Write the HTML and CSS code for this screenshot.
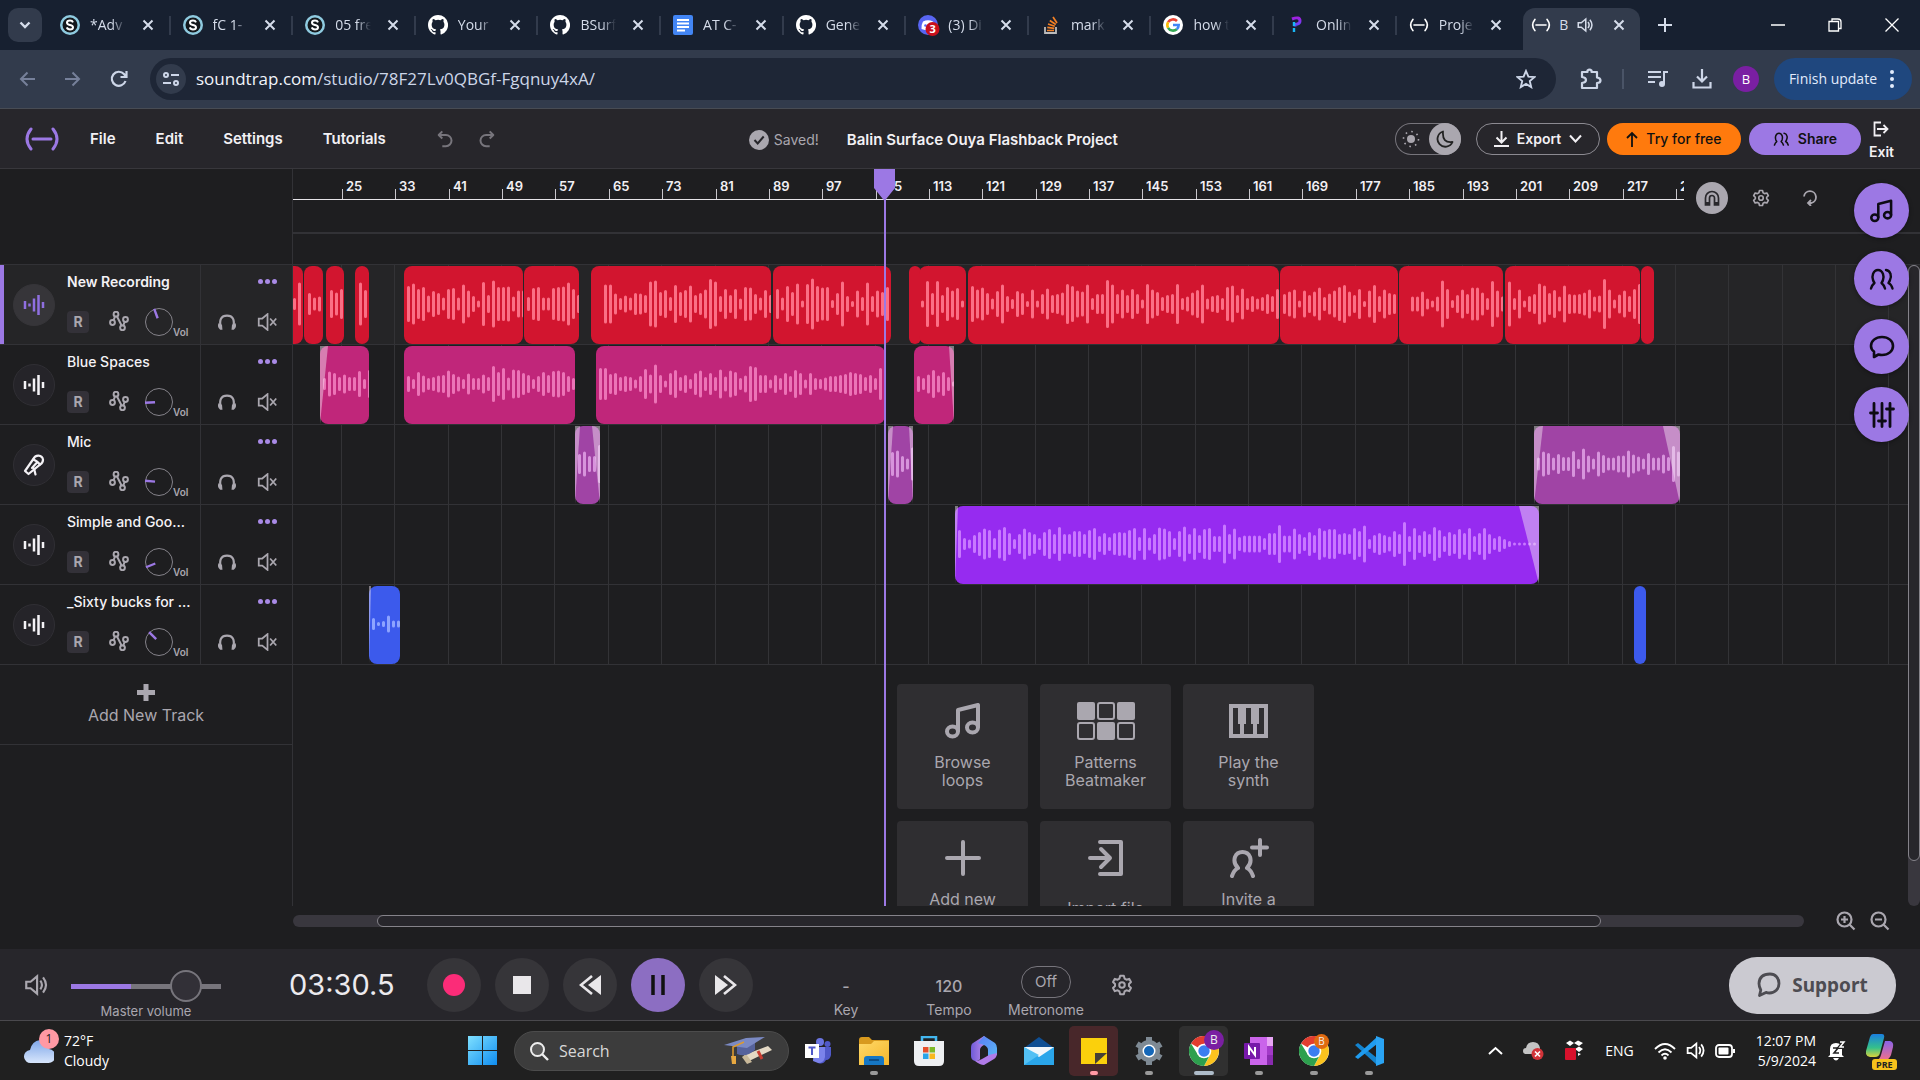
FILE: index.html
```html
<!DOCTYPE html>
<html lang="en">
<head>
<meta charset="utf-8">
<title>Balin Surface Ouya Flashback Project</title>
<link rel="stylesheet" href="styles.css">
</head>
<body>
<svg class="sprite" aria-hidden="true">
  <defs>
    <linearGradient id="gWin" x1="0" y1="0" x2="1" y2="1"><stop offset="0" stop-color="#7fe0ff"/><stop offset="1" stop-color="#0f8df0"/></linearGradient>
    <linearGradient id="gCloud" x1="0" y1="0" x2="0" y2="1"><stop offset="0" stop-color="#7ea6e8"/><stop offset="1" stop-color="#d8e6fc"/></linearGradient>
    <linearGradient id="gFolder" x1="0" y1="0" x2="1" y2="1"><stop offset="0" stop-color="#ffd968"/><stop offset="1" stop-color="#f5b62c"/></linearGradient>
    <linearGradient id="gM1" x1="0" y1="0" x2="1" y2="1"><stop offset="0" stop-color="#5b7cf5"/><stop offset="1" stop-color="#59b8f5"/></linearGradient>
    <linearGradient id="gM2" x1="0" y1="0" x2="1" y2="0"><stop offset="0" stop-color="#6f5bd8"/><stop offset="1" stop-color="#d69bf0"/></linearGradient>
    <linearGradient id="gC1" x1="0" y1="0" x2="0" y2="1"><stop offset="0" stop-color="#1a7fe0"/><stop offset=".6" stop-color="#35c08a"/><stop offset="1" stop-color="#d9d23c"/></linearGradient>
    <linearGradient id="gC2" x1="0" y1="0" x2="0" y2="1"><stop offset="0" stop-color="#8a63e8"/><stop offset="1" stop-color="#f0708a"/></linearGradient>
    <linearGradient id="gP" x1="0" y1="0" x2="0" y2="1"><stop offset="0" stop-color="#a020e0"/><stop offset="1" stop-color="#5a50ff"/></linearGradient>
  </defs>
  <symbol id="i-x" viewBox="0 0 12 12"><path d="M1.500 1.500l9 9M10.500 1.500l-9 9" stroke="currentColor" stroke-width="2" fill="none"/></symbol>
  <symbol id="i-s" viewBox="0 0 20 20"><circle cx="10" cy="10" r="10" fill="#8fcbe0"/><circle cx="10" cy="10" r="7.500" fill="#14181c"/><path d="M13 7.300C12.500 6 11.500 5.500 10 5.500c-1.800 0-3 .8-3 2.200 0 3 6 1.400 6 4.500 0 1.500-1.300 2.300-3 2.300-1.600 0-2.700-.7-3.200-2.100" fill="none" stroke="#fff" stroke-width="2"/></symbol>
  <symbol id="i-gh" viewBox="0 0 16 16"><path fill="#fff" d="M8 0C3.580 0 0 3.580 0 8c0 3.540 2.290 6.530 5.470 7.590.4.070.55-.17.55-.38v-1.500c-2.010.37-2.530-.49-2.690-.94-.09-.23-.48-.94-.82-1.130-.28-.15-.68-.52-.01-.53.63-.01 1.080.58 1.230.82.72 1.210 1.870.87 2.330.66.07-.52.28-.87.51-1.070-1.780-.2-3.640-.89-3.640-3.950 0-.87.31-1.590.82-2.150-.08-.2-.36-1.020.08-2.120 0 0 .67-.21 2.200.82a7.600 7.600 0 0 1 4 0c1.530-1.040 2.200-.82 2.200-.82.44 1.100.16 1.920.08 2.120.51.56.82 1.270.82 2.150 0 3.070-1.870 3.750-3.650 3.950.29.25.54.73.54 1.480v2.210c0 .21.15.46.55.38A8 8 0 0 0 8 0z"/></symbol>
  <symbol id="i-doc" viewBox="0 0 20 20"><rect width="20" height="20" rx="2" fill="#4285f4"/><path d="M4 5h12M4 8.500h12M4 12h12M4 15.500h8" stroke="#fff" stroke-width="1.800"/></symbol>
  <symbol id="i-dis" viewBox="0 0 22 22"><circle cx="10" cy="10" r="10" fill="#5865f2"/><path d="M5 6.500Q10 4 15 6.500q2 3.500 1.500 7.500-6 2.500-13 0Q3 10 5 6.500z" fill="#fff"/><circle cx="7.500" cy="10.500" r="1.300" fill="#5865f2"/><circle cx="14.500" cy="14" r="7" fill="#c8101c"/></symbol>
  <symbol id="i-so" viewBox="0 0 20 20"><path d="M4 12v6h11v-6" fill="none" stroke="#bcbbbb" stroke-width="1.800"/><path d="M6 15.500h7M6.300 12.300l7 1M7 9l6.800 2.300M8.800 5.500l6 4M12 2l4 6" stroke="#f48024" stroke-width="1.700"/></symbol>
  <symbol id="i-g" viewBox="0 0 20 20"><circle cx="10" cy="10" r="10" fill="#fff"/><g fill="none" stroke-width="2.600"><path d="M14 6A5.700 5.700 0 0 0 5.100 7.200" stroke="#ea4335"/><path d="M5.100 7.200a5.700 5.700 0 0 0 0 5.600" stroke="#fbbc05"/><path d="M5.100 12.800a5.700 5.700 0 0 0 8.700 1.400" stroke="#34a853"/><path d="M13.800 14.200A5.700 5.700 0 0 0 15.700 10H10" stroke="#4285f4"/></g></symbol>
  <symbol id="i-p" viewBox="0 0 20 20"><path d="M6 4q8-3 8 2 0 3-5 3.500v2" fill="none" stroke="url(#gP)" stroke-width="3"/><path d="M8 7v11" stroke="#19b6f5" stroke-width="2.400" stroke-dasharray="4 2"/></symbol>
  <symbol id="i-st" viewBox="0 0 36 24"><path d="M7 2Q-1 12 7 22M29 2q8 10 0 20M9 12h18" fill="none" stroke="currentColor" stroke-width="3" stroke-linecap="round"/></symbol>
  <symbol id="i-spk" viewBox="0 0 24 24"><path d="M3 9v6h4l6 5V4L7 9z" fill="none" stroke="currentColor" stroke-width="2"/><path d="M16 8q3 4 0 8M18.500 5q5.500 7 0 14" fill="none" stroke="currentColor" stroke-width="2"/></symbol>
  <symbol id="i-mute" viewBox="0 0 24 20"><path d="M2 6v8h4l6 5V1L6 6z" fill="none" stroke="currentColor" stroke-width="2"/><path d="M15 6l7 8M22 6l-7 8" stroke="currentColor" stroke-width="2"/></symbol>
  <symbol id="i-note" viewBox="0 0 36 36"><g fill="none" stroke="currentColor" stroke-width="4" stroke-linejoin="round"><ellipse cx="7.500" cy="28.500" rx="5.500" ry="5"/><ellipse cx="27.500" cy="24.500" rx="5.500" ry="5"/><path d="M13 28.500V7l20-5v22.500"/></g></symbol>
  <symbol id="i-people" viewBox="0 0 26 22"><g fill="none" stroke="currentColor" stroke-width="2.400" stroke-linecap="round" stroke-linejoin="round"><path d="M2 20.500q1-3.500 3.500-5.500Q4.500 13.500 4 12q-1-3.500 0-6 1.500-4 5-4t5 4q1 2.500 0 6-.5 1.500-1.500 3 2.500 2 3.500 5.500M17 2q3.500.5 4.500 4 1 3-.5 6-.5 1.500-1.500 3 3 1.500 4 5.500"/></g></symbol>
  <symbol id="i-chat" viewBox="0 0 26 24"><path d="M13 2c6.500 0 11 4 11 9s-4.500 9-11 9q-2 0-3.500-.5L5 22v-5.500Q2 14.500 2 11c0-5 4.500-9 11-9z" fill="none" stroke="currentColor" stroke-width="2.600" stroke-linejoin="round"/></symbol>
  <symbol id="i-mix" viewBox="0 0 26 26"><path d="M5 1.500v23M13 1.500v23M21 1.500v23M1.500 11h7M9.500 19h7M17.500 7h7" fill="none" stroke="currentColor" stroke-width="2.800" stroke-linecap="round"/></symbol>
  <symbol id="i-gear" viewBox="0 0 24 24"><path d="M10 2h4l.8 3 2 1.200 3-.9 2 3.500-2.200 2.200v2l2.200 2.200-2 3.500-3-.9-2 1.200-.8 3h-4l-.8-3-2-1.200-3 .9-2-3.500L4.400 13v-2L2.200 8.800l2-3.500 3 .9 2-1.200z" fill="none" stroke="currentColor" stroke-width="2.200" stroke-linejoin="round"/><circle cx="12" cy="12" r="3" fill="none" stroke="currentColor" stroke-width="2.200"/></symbol>
  <symbol id="i-wave" viewBox="0 0 22 22"><path d="M2 7v8M6.500 9.500v3M11 4.500v13M15.500 1v20M20 8v6" stroke="currentColor" stroke-width="2.500"/></symbol>
  <symbol id="i-mic" viewBox="0 0 22 22"><g fill="none" stroke="currentColor" stroke-width="2.200" stroke-linejoin="round" stroke-linecap="round"><path d="M10 5.500q2-4 5.500-3.800 4 .3 4.500 4 0 3-3 5L5.500 20 2 17z"/><path d="M10 5.500q4 1 7 5.200M13.500 9l-4.500 5M11 14.500l1.500 6"/></g></symbol>
  <symbol id="i-auto" viewBox="0 0 20 20"><g fill="none" stroke="currentColor" stroke-width="2"><circle cx="3.500" cy="11.500" r="2.400"/><circle cx="7" cy="3.200" r="2.400"/><circle cx="13.500" cy="16.800" r="2.400"/><circle cx="16.500" cy="8.500" r="2.400"/><path d="M4.500 9.300L6 5.500M8 5.500l4.600 9M14.300 14.500l1.500-3.800"/></g></symbol>
  <symbol id="i-head" viewBox="0 0 22 18"><path d="M4 14.500Q1.500 2 11 2t7 12.500" fill="none" stroke="currentColor" stroke-width="2.400"/><path d="M1.500 10.500l4 1.500.5 5.500H3.500Q0 15 1.500 10.500zM20.500 10.500l-4 1.500-.5 5.500h2.500q3.500-2.500 2-7z" fill="currentColor"/></symbol>
  <symbol id="i-undo" viewBox="0 0 18 20"><path d="M6 1.500L2 5.500l4 4M2.500 5.500H10a6 6 0 0 1 0 12.500H6" fill="none" stroke="currentColor" stroke-width="2.200" stroke-linejoin="round"/></symbol>
  <symbol id="i-chrome" viewBox="0 0 30 30"><circle cx="15" cy="15" r="15" fill="#fff"/><path d="M15 15L2 7.500A15 15 0 0 1 28 7.500H15z" fill="#e23d30"/><path d="M15 8h13.200A15 15 0 0 1 15 30l6.200-11z" fill="#fcc31e"/><path d="M2 7.500A15 15 0 0 0 15 30l6.200-11.400-12.400 0z" fill="#2da04e"/><circle cx="15" cy="15" r="7.300" fill="#fff"/><circle cx="15" cy="15" r="5.700" fill="#3b7df0"/></symbol>
</svg>

<header class="tabstrip">
  <button class="tab-search" aria-label="Search tabs"><svg width="12" height="8" viewBox="0 0 12 8"><path d="M1.500 1.500L6 6l4.500-4.500" fill="none" stroke="currentColor" stroke-width="2.400"/></svg></button>
  <div class="tabs" role="tablist">
    <div class="tab"><svg class="fav"><use href="#i-s"/></svg><span class="tab-title">*Adv</span><button aria-label="Close tab"><svg><use href="#i-x"/></svg></button></div>
    <div class="tab"><svg class="fav"><use href="#i-s"/></svg><span class="tab-title">fC 1-</span><button aria-label="Close tab"><svg><use href="#i-x"/></svg></button></div>
    <div class="tab"><svg class="fav"><use href="#i-s"/></svg><span class="tab-title">05 fre</span><button aria-label="Close tab"><svg><use href="#i-x"/></svg></button></div>
    <div class="tab"><svg class="fav"><use href="#i-gh"/></svg><span class="tab-title">Your</span><button aria-label="Close tab"><svg><use href="#i-x"/></svg></button></div>
    <div class="tab"><svg class="fav"><use href="#i-gh"/></svg><span class="tab-title">BSurf</span><button aria-label="Close tab"><svg><use href="#i-x"/></svg></button></div>
    <div class="tab"><svg class="fav"><use href="#i-doc"/></svg><span class="tab-title">AT C-</span><button aria-label="Close tab"><svg><use href="#i-x"/></svg></button></div>
    <div class="tab"><svg class="fav"><use href="#i-gh"/></svg><span class="tab-title">Gene</span><button aria-label="Close tab"><svg><use href="#i-x"/></svg></button></div>
    <div class="tab"><span class="fav fav-badged"><svg><use href="#i-dis"/></svg><b>3</b></span><span class="tab-title">(3) Di</span><button aria-label="Close tab"><svg><use href="#i-x"/></svg></button></div>
    <div class="tab"><svg class="fav"><use href="#i-so"/></svg><span class="tab-title">mark</span><button aria-label="Close tab"><svg><use href="#i-x"/></svg></button></div>
    <div class="tab"><svg class="fav"><use href="#i-g"/></svg><span class="tab-title">how t</span><button aria-label="Close tab"><svg><use href="#i-x"/></svg></button></div>
    <div class="tab"><svg class="fav"><use href="#i-p"/></svg><span class="tab-title">Onlin</span><button aria-label="Close tab"><svg><use href="#i-x"/></svg></button></div>
    <div class="tab no-sep"><svg class="fav"><use href="#i-st"/></svg><span class="tab-title">Proje</span><button aria-label="Close tab"><svg><use href="#i-x"/></svg></button></div>
    <div class="tab active"><svg class="fav"><use href="#i-st"/></svg><span class="tab-title">B</span><svg class="audio"><use href="#i-spk"/></svg><button aria-label="Close tab"><svg><use href="#i-x"/></svg></button></div>
  </div>
  <button class="new-tab" aria-label="New tab"><svg width="14" height="14" viewBox="0 0 14 14"><path d="M7 0v14M0 7h14" stroke="currentColor" stroke-width="2"/></svg></button>
  <div class="window-controls">
    <button aria-label="Minimize"><svg width="14" height="14"><path d="M0 7h14" stroke="currentColor" stroke-width="1.500"/></svg></button>
    <button aria-label="Restore"><svg width="14" height="14"><path d="M1 3.500h9.500V13H1zM4 3.500V1h6q3 0 3 3v6.500h-2.500" fill="none" stroke="currentColor" stroke-width="1.300"/></svg></button>
    <button aria-label="Close"><svg width="14" height="14"><path d="M.5.5l13 13M13.500.5l-13 13" stroke="currentColor" stroke-width="1.300"/></svg></button>
  </div>
</header>

<div class="toolbar">
  <button class="nav-btn dim" aria-label="Back"><svg width="16" height="16" viewBox="0 0 16 16"><path d="M16 8H2M8.500 1.500L2 8l6.500 6.500" fill="none" stroke="currentColor" stroke-width="2"/></svg></button>
  <button class="nav-btn dim" aria-label="Forward"><svg width="16" height="16" viewBox="0 0 16 16"><path d="M0 8h14M7.500 1.500L14 8l-6.500 6.500" fill="none" stroke="currentColor" stroke-width="2"/></svg></button>
  <button class="nav-btn" aria-label="Reload"><svg width="18" height="18" viewBox="0 0 18 18"><path d="M15.500 11A7 7 0 1 1 14 4l2 2.500M16.500 1v6h-6" fill="none" stroke="currentColor" stroke-width="2.200"/></svg></button>
  <div class="omnibox">
    <button class="site-chip" aria-label="Site information"><svg width="16" height="14" viewBox="0 0 16 14"><g fill="none" stroke="currentColor" stroke-width="2"><circle cx="3" cy="3" r="2"/><path d="M8 3h8M0 11h8"/><circle cx="13" cy="11" r="2"/></g></svg></button>
    <span class="url" role="textbox" aria-label="Address"><b>soundtrap.com</b>/studio/78F27Lv0QBGf-Fgqnuy4xA/</span>
    <button class="star" aria-label="Bookmark"><svg width="20" height="20" viewBox="0 0 20 20"><path d="M10 2l2.400 5.600 6 .5-4.600 4 1.400 6L10 14.900 4.800 18.100l1.400-6-4.600-4 6-.5z" fill="none" stroke="currentColor" stroke-width="1.900"/></svg></button>
  </div>
  <div class="tool-icons">
    <button aria-label="Extensions"><svg width="22" height="22" viewBox="0 0 22 22"><path d="M2 4h5.500V2.500q2-2 4 0V4H17v5.500q3.500.5 3.500 3T17 15v5H2v-5q4-.5 4-3T2 9z" fill="none" stroke="currentColor" stroke-width="2.200" stroke-linejoin="round"/></svg></button>
    <i class="divider"></i>
    <button aria-label="Media"><svg width="20" height="18" viewBox="0 0 20 18"><path d="M0 2h13M0 7h13M0 12h7M16 14V2h4" fill="none" stroke="currentColor" stroke-width="2"/><circle cx="14" cy="14" r="3" fill="currentColor"/></svg></button>
    <button aria-label="Downloads"><svg width="20" height="20" viewBox="0 0 20 20"><path d="M10 0v12M5 7.500l5 5 5-5M1.500 13v5.500h17V13" fill="none" stroke="currentColor" stroke-width="2.200"/></svg></button>
    <button aria-label="Profile"><span class="avatar">B</span></button>
  </div>
  <button class="finish">Finish update<svg width="4" height="18"><circle cx="2" cy="2" r="2" fill="currentColor"/><circle cx="2" cy="9" r="2" fill="currentColor"/><circle cx="2" cy="16" r="2" fill="currentColor"/></svg></button>
</div>

<div class="app-bar">
  <a class="logo" href="#" aria-label="Home"><svg width="36" height="24"><use href="#i-st"/></svg></a>
  <nav class="menu"><button>File</button><button>Edit</button><button>Settings</button><button>Tutorials</button></nav>
  <div class="history">
    <button aria-label="Undo"><svg width="18" height="18"><use href="#i-undo"/></svg></button>
    <button aria-label="Redo"><svg class="flip" width="18" height="18"><use href="#i-undo"/></svg></button>
  </div>
  <div class="project">
    <span class="saved"><svg width="20" height="20"><circle cx="10" cy="10" r="10" fill="#aaa7af"/><path d="M5.500 10l3.200 3.500 6-7" fill="none" stroke="#27262b" stroke-width="2"/></svg>Saved!</span>
    <span class="project-name">Balin Surface Ouya Flashback Project</span>
  </div>
  <div class="actions">
    <button class="theme" aria-label="Dark mode">
      <svg width="18" height="18" viewBox="0 0 18 18"><circle cx="9" cy="9" r="4" fill="#aaa7af"/><circle cx="9" cy="9" r="7.500" fill="none" stroke="#aaa7af" stroke-width="1.600" stroke-dasharray="1.600 4.290"/></svg>
      <span class="theme-knob"><svg width="18" height="18" viewBox="0 0 18 18"><path d="M7 1.500a7.800 7.800 0 1 0 9.500 10.500Q6 13.500 7 1.500z" fill="none" stroke="#222" stroke-width="1.800" stroke-linejoin="round"/></svg></span>
    </button>
    <button class="pill export"><svg width="15" height="16" viewBox="0 0 15 16"><path d="M7.500 0v11M2.500 6.500l5 5 5-5M0 15h15" fill="none" stroke="currentColor" stroke-width="2"/></svg>Export<svg width="13" height="10" viewBox="0 0 13 10"><path d="M1 1.500l5.500 6 5.500-6" fill="none" stroke="currentColor" stroke-width="2"/></svg></button>
    <button class="pill try"><svg width="12" height="16" viewBox="0 0 12 16"><path d="M6 16V2M1 7l5-5 5 5" fill="none" stroke="currentColor" stroke-width="1.800"/></svg>Try for free</button>
    <button class="pill share"><svg width="17" height="14"><use href="#i-people"/></svg>Share</button>
    <button class="exit"><svg width="16" height="16" viewBox="0 0 16 16"><path d="M8 1.500H1.500v13H8M4 8h10M10.500 4l4 4-4 4" fill="none" stroke="currentColor" stroke-width="1.800"/></svg>Exit</button>
  </div>
</div>

<main class="studio">
  <section class="workspace">
    <aside class="track-panel">
      <div class="panel-head"></div>
      <div class="track-list" id="trackList"></div>
      <button class="add-track"><svg width="18" height="17" viewBox="0 0 18 17"><path d="M9 0v17M0 8.500h18" stroke="currentColor" stroke-width="5"/></svg>Add New Track</button>
    </aside>
    <div class="timeline">
      <div class="ruler-row">
        <div class="ruler" id="ruler"></div>
        <div class="ruler-tools">
          <button class="snap on" aria-label="Snap to grid"><svg width="16" height="16" viewBox="0 0 16 16"><path d="M1.500 15V8a6.500 6.500 0 0 1 13 0v7h-4V8a2.500 2.500 0 0 0-5 0v7z" fill="none" stroke="currentColor" stroke-width="1.700"/><path d="M1.500 12h4v3h-4zM10.500 12h4v3h-4z" fill="currentColor"/></svg></button>
          <button aria-label="Timeline settings"><svg width="18" height="18"><use href="#i-gear"/></svg></button>
          <button aria-label="Loop"><svg width="16" height="16" viewBox="0 0 16 16"><path d="M2 6.500A6 6 0 1 1 9.500 13H6M9 10l-3 3 3 3" fill="none" stroke="currentColor" stroke-width="1.800"/></svg></button>
        </div>
      </div>
      <div class="lanes" id="lanes"></div>
      <div class="starters">
        <button><span class="glyph"><svg width="36" height="36"><use href="#i-note"/></svg></span>Browse<br>loops</button>
        <button><span class="glyph"><svg width="58" height="38" viewBox="0 0 58 38"><g fill="currentColor"><rect width="18" height="18" rx="2"/><rect x="40" width="18" height="18" rx="2"/><rect x="20" y="20" width="18" height="18" rx="2"/></g><g fill="none" stroke="currentColor" stroke-width="2"><rect x="21" y="1" width="16" height="16" rx="2"/><rect x="1" y="21" width="16" height="16" rx="2"/><rect x="41" y="21" width="16" height="16" rx="2"/></g></svg></span>Patterns<br>Beatmaker</button>
        <button><span class="glyph"><svg width="39" height="34" viewBox="0 0 39 34"><path d="M2 2h35v30H2zM13 18v14M26 18v14" fill="none" stroke="currentColor" stroke-width="4"/><path d="M9 3h8v17H9zM22 3h8v17h-8z" fill="currentColor"/></svg></span>Play the<br>synth</button>
        <button><span class="glyph"><svg width="36" height="36"><path d="M18 2v32M2 18h32" stroke="currentColor" stroke-width="4" stroke-linecap="round"/></svg></span>Add new<br>track</button>
        <button class="one-line"><span class="glyph"><svg width="36" height="36"><path d="M12 2h21v32H12M2 18h20M13 9l9 9-9 9" fill="none" stroke="currentColor" stroke-width="4" stroke-linecap="round" stroke-linejoin="round"/></svg></span>Import file</button>
        <button><span class="glyph"><svg width="40" height="40"><path d="M31 2v15M23 9.500h15M3 38q2-6 6-8-5-5-3-11 2-5 7.500-5t7.500 5q2 6-3 11 4 2 6 8" fill="none" stroke="currentColor" stroke-width="4" stroke-linecap="round" stroke-linejoin="round"/></svg></span>Invite a<br>friend</button>
      </div>
      <div class="playhead"><svg width="21" height="32" viewBox="0 0 21 32"><path d="M0 0h21v19L10.500 32 0 19z" fill="#9c78e4"/></svg></div>
      <div class="vscroll"><span></span></div>
    </div>
  </section>
  <div class="fabs">
    <button aria-label="Loops"><svg width="23" height="24"><use href="#i-note"/></svg></button>
    <button aria-label="Collaborators"><svg width="26" height="22"><use href="#i-people"/></svg></button>
    <button aria-label="Chat"><svg width="26" height="24"><use href="#i-chat"/></svg></button>
    <button aria-label="Mixer"><svg width="26" height="26"><use href="#i-mix"/></svg></button>
  </div>
  <div class="hscroll-row">
    <div class="hscroll"><span></span></div>
    <button aria-label="Zoom in"><svg width="20" height="20" viewBox="0 0 20 20"><circle cx="8.500" cy="8.500" r="7" fill="none" stroke="currentColor" stroke-width="2.200"/><path d="M13.500 13.500l5 5M8.500 5v7M5 8.500h7" stroke="currentColor" stroke-width="2.200"/></svg></button>
    <button aria-label="Zoom out"><svg width="20" height="20" viewBox="0 0 20 20"><circle cx="8.500" cy="8.500" r="7" fill="none" stroke="currentColor" stroke-width="2.200"/><path d="M13.500 13.500l5 5M5 8.500h7" stroke="currentColor" stroke-width="2.200"/></svg></button>
  </div>
</main>

<footer class="transport">
  <svg class="vol-icon" width="26" height="26"><use href="#i-spk"/></svg>
  <div class="master"><input id="master" type="range" min="0" max="100" value="84"><label for="master">Master volume</label></div>
  <output class="clock">03:30.5</output>
  <div class="buttons">
    <button aria-label="Record"><svg width="22" height="24"><circle cx="11" cy="12" r="11" fill="#fb2c78"/></svg></button>
    <button aria-label="Stop"><svg width="18" height="18"><rect width="18" height="18" fill="#e9e7ea"/></svg></button>
    <button aria-label="Rewind"><svg width="22" height="20"><path d="M22 0v20L9 10z" fill="#e9e7ea"/><path d="M13 1L2 10l11 9" fill="none" stroke="#e9e7ea" stroke-width="2.600"/></svg></button>
    <button class="pause" aria-label="Pause"><svg width="14" height="20"><path d="M2 0v20M12 0v20" stroke="#111" stroke-width="3.500"/></svg></button>
    <button aria-label="Fast forward"><svg class="flip" width="22" height="20"><path d="M22 0v20L9 10z" fill="#e9e7ea"/><path d="M13 1L2 10l11 9" fill="none" stroke="#e9e7ea" stroke-width="2.600"/></svg></button>
  </div>
  <div class="params">
    <div class="param"><span class="val">-</span><span>Key</span></div>
    <div class="param"><span class="val">120</span><span>Tempo</span></div>
    <div class="param metro"><button>Off</button><span>Metronome</span></div>
  </div>
  <button class="metro-gear" aria-label="Metronome settings"><svg width="22" height="22"><use href="#i-gear"/></svg></button>
  <button class="support"><svg width="24" height="26" viewBox="0 0 24 26"><path d="M13 2c5.500 0 9 4 9 9.500S18 21 12.500 21q-2 0-3.500-.6L2.500 23.500 3.800 18Q2 15 2 11.500 2.500 2 13 2z" fill="none" stroke="currentColor" stroke-width="2.800" stroke-linejoin="round"/></svg>Support</button>
</footer>

<div class="taskbar">
  <div class="weather">
    <span class="weather-icon"><svg width="30" height="26" viewBox="0 0 30 26"><path d="M7 25a6.500 6.500 0 0 1-1-13Q8 3 16 2q8 0 9 9a7 7 0 0 1-1 14z" fill="url(#gCloud)"/></svg><b>1</b></span>
    <span>72°F<br>Cloudy</span>
  </div>
  <div class="dock">
    <button class="start" aria-label="Start"><svg width="30" height="30"><path d="M0 0h14v14H0zM15 0h14v14H15zM0 15h14v14H0zM15 15h14v14H15z" fill="url(#gWin)"/></svg></button>
    <label class="search"><svg width="20" height="20"><circle cx="8.500" cy="8.500" r="6.500" fill="#5a5a5a" stroke="#eee" stroke-width="2"/><path d="M13 13l6 6" stroke="#eee" stroke-width="2.400"/></svg><input type="text" placeholder="Search" aria-label="Search">
      <svg width="50" height="30" viewBox="0 0 50 30"><path d="M20 19l24-9 4 4-25 12z" fill="#e4d9c4"/><path d="M18 21l5 7 5-2-6-8z" fill="#c9b99a"/><path d="M34 15l4 8" stroke="#c83c30" stroke-width="3"/><path d="M13 9v9q9 4 18-4V6z" fill="#56639c"/><path d="M0 9L22 2l19-1-18 11z" fill="#7b8ac4"/><path d="M20 6L9 11v11" fill="none" stroke="#dd9a30" stroke-width="1.600"/><path d="M7 20h5v8H8z" fill="#e8a840"/></svg></label>
    <button aria-label="Teams"><svg width="28" height="26"><circle cx="15" cy="4" r="4" fill="#6a74e0"/><circle cx="22.500" cy="6" r="3" fill="#5059c9"/><path d="M10 9h16v8q-1 5-5 5-3 5-8 3z" fill="#5059c9"/><path d="M9 9h11v10q-1 6-7 6l-5-2z" fill="#7b83eb"/><rect y="6" width="14" height="14" fill="#fff"/><path d="M3.500 9.500h7M7 9.500V17" stroke="#5059c9" stroke-width="2"/></svg></button>
    <button class="run" aria-label="File Explorer"><svg width="30" height="28"><path d="M0 3q0-3 3-3h7l3 3h17v8H0z" fill="#d89a1e"/><path d="M0 7h12l3-3h15v24H0z" fill="url(#gFolder)"/><path d="M5 28v-6q0-3 3-3h14q3 0 3 3v6z" fill="#1677c4"/><path d="M10 23h10" stroke="#0c4f8a" stroke-width="2"/></svg></button>
    <button aria-label="Store"><svg width="30" height="30"><path d="M8 6V1h14v5" fill="none" stroke="#42b6ee" stroke-width="2.500"/><path d="M0 5h30v20q0 5-5 5H5q-5 0-5-5z" fill="#eef0f2"/><path d="M9 11h5.500v5.500H9z" fill="#e5502a"/><path d="M15.500 11H21v5.500h-5.500z" fill="#7db928"/><path d="M9 17.500h5.500V23H9z" fill="#2ba5e8"/><path d="M15.500 17.500H21V23h-5.500z" fill="#f8b81e"/></svg></button>
    <button aria-label="Copilot 365"><svg width="28" height="30"><path d="M14 0L3 7Q1 8 1 12v8q0 4 4 5 4 0 5-2v-9q0-3 4-5l6-3z" fill="url(#gM2)"/><path d="M14 0l11 7q2 2 2 5v7l-9 2v-7q0-3-4-5L8 7z" fill="url(#gM1)"/><path d="M27 17q0 4-3 6l-10 6q-4 0-9-4 4 0 7-2l7-4z" fill="#b07be8"/></svg></button>
    <button aria-label="Mail"><svg width="30" height="28"><path d="M0 11L15 0l15 11z" fill="#0f4f94"/><path d="M0 10h30v18H0z" fill="#2aa6ea"/><path d="M0 10h30L15 20z" fill="#f2f7fb"/><path d="M0 10v18L15 18z" fill="#53c0f4"/></svg></button>
    <button class="run alert" aria-label="Sticky Notes"><svg width="26" height="26"><path d="M0 0h26v26H0z" fill="#fbd00c"/><path d="M14 26V15h12z" fill="#463f35"/></svg></button>
    <button class="run" aria-label="Settings"><svg width="30" height="30" viewBox="0 0 30 30"><g stroke="#7e8a94" stroke-width="6"><path d="M15 1v28M3 8l24 14M3 22L27 8"/></g><circle cx="15" cy="15" r="11" fill="#7e8a94"/><circle cx="15" cy="15" r="6.500" fill="#fff"/><circle cx="15" cy="15" r="5" fill="#1467b8"/></svg></button>
    <button class="run current" aria-label="Chrome"><svg width="30" height="30"><use href="#i-chrome"/></svg><b class="who">B</b></button>
    <button class="run" aria-label="OneNote"><svg width="30" height="28"><path d="M6 0h23v28H6z" fill="#ca64ea"/><path d="M23 0h6v9h-6z" fill="#e8a5f5"/><path d="M23 9h6v9h-6z" fill="#a33ac8"/><path d="M23 18h6v10h-6z" fill="#8a2bb0"/><rect y="6" width="16" height="16" rx="1" fill="#7719aa"/><path d="M5 18v-8l6 8v-8" fill="none" stroke="#fff" stroke-width="2"/></svg></button>
    <button class="run" aria-label="Chrome profile 2"><svg width="30" height="30"><use href="#i-chrome"/></svg><b class="who small">B</b></button>
    <button class="run" aria-label="Visual Studio Code"><svg width="30" height="30"><path d="M1 9l3-2 19 15v7z" fill="#1484cf"/><path d="M1 21l3 2L23 8V1z" fill="#1f9cf0"/><path d="M22 0l8 3v24l-8 3z" fill="#2aa4f4"/></svg></button>
  </div>
  <div class="tray">
    <svg width="15" height="9"><path d="M1 8l6.500-6L14 8" fill="none" stroke="#fff" stroke-width="2"/></svg>
    <svg width="22" height="20"><path d="M3 13Q0 13 0 10t3-3q1-6 7-6t7 6v6z" fill="#c4c4c4"/><circle cx="14.500" cy="13" r="6" fill="#d03338"/><path d="M12 10.500l5 5M17 10.500l-5 5" stroke="#fff" stroke-width="1.600"/></svg>
    <svg width="20" height="22"><path d="M1 3l4-2.500L9 3 5 6zM9 3l4-2.500L18 3l-4 3zM10 9l4-2.500L18 9l-4 3z" fill="#fff"/><rect y="8" width="11" height="12" rx="1" fill="#d8112c"/><path d="M13 13l3 1-3 2z" fill="#fff"/></svg>
    <span>ENG</span>
    <span class="net">
      <svg width="22" height="18" viewBox="0 0 22 18"><g fill="none" stroke="#fff" stroke-width="1.800"><path d="M1 7q10-10 20 0M4.500 10.500q6.500-6.500 13 0M7.500 13.500q3.500-3.500 7 0"/></g><circle cx="11" cy="16" r="1.800" fill="#fff"/></svg>
      <svg class="white" width="21" height="21"><use href="#i-spk"/></svg>
      <svg width="21" height="14"><rect x="1" y="1" width="16" height="12" rx="3" fill="none" stroke="#fff" stroke-width="1.800"/><rect x="3.500" y="3.500" width="10" height="7" rx="1" fill="#fff"/><path d="M19 5v4" stroke="#fff" stroke-width="2"/></svg>
    </span>
    <span class="datetime">
      <span class="date">12:07 PM<br>5/9/2024</span>
      <svg width="18" height="20"><path d="M2 14V8q0-6 6-6t6 6v6l2 2H0zM5 17h6q-3 5-6 0z" fill="#fff"/><path d="M5 7h5l-4 5h5" fill="none" stroke="#222" stroke-width="1.600"/><path d="M12 1h4l-4 5h4" fill="none" stroke="#222" stroke-width="4"/><path d="M12 1h4l-4 5h4" fill="none" stroke="#fff" stroke-width="1.500"/></svg>
    </span>
    <span class="copilot"><svg width="30" height="28"><path d="M7 0h9q3 0 2 4l-4 15q-1 4-5 4H4q-5-1-4-6L4 3q1-3 3-3z" fill="url(#gC1)"/><path d="M19 7h5q4 1 3 6l-2 8q-2 5-6 5h-8q3-1 4-5z" fill="url(#gC2)"/></svg><b>PRE</b></span>
  </div>
</div>
<script src="studio.js"></script>
</body>
</html>
```
FILE: styles.css
```css
:root {
  --chrome-font: "Open Sans", "Noto Sans", sans-serif;
  --app-font: Inter, "Liberation Sans", sans-serif;
  --accent: #9c78e4;
  --muted: #aaa7af;
  --line: #323236;
  --bg: #1e1e20;
  --panel: #27262b;
}
* { box-sizing: border-box; }
body {
  margin: 0;
  height: 100vh;
  display: flex;
  flex-direction: column;
  overflow: hidden;
  background: var(--bg);
  color: #f2f0f4;
  font: 16px/20px var(--app-font);
}
button {
  margin: 0;
  padding: 0;
  border: 0;
  background: none;
  color: inherit;
  font: inherit;
  display: inline-flex;
  align-items: center;
  justify-content: center;
}
svg { display: block; flex: none; }
.sprite { position: absolute; width: 0; height: 0; }
.flip { transform: scaleX(-1); }

/* Browser tab strip */
.tabstrip {
  flex: none;
  height: 50px;
  display: flex;
  align-items: center;
  background: #172030;
  color: #d5dcea;
  font: 14px/20px var(--chrome-font);
}
.tab-search {
  width: 34px;
  height: 34px;
  margin: 0 6px 0 8px;
  border-radius: 10px;
  background: #323b4c;
}
.tabs {
  flex: 1 1 0;
  max-width: 1596px;
  height: 50px;
  padding-top: 8px;
  display: flex;
}
.tab {
  position: relative;
  flex: 1 1 0;
  min-width: 0;
  display: flex;
  align-items: center;
  gap: 10px;
  padding: 0 11px 8px 12px;
}
.tab::after {
  content: "";
  position: absolute;
  right: 0;
  top: 8px;
  width: 2px;
  height: 19px;
  background: #323b4c;
}
.tab.no-sep::after { display: none; }
.tab .fav { width: 20px; height: 20px; color: #fff; }
.fav-badged { position: relative; flex: none; }
.fav-badged svg { width: 22px; height: 22px; }
.fav-badged b {
  position: absolute;
  left: 8px;
  top: 6px;
  width: 13px;
  text-align: center;
  font-size: 11px;
  line-height: 16px;
  color: #fff;
}
.tab-title {
  flex: 1;
  min-width: 0;
  overflow: hidden;
  white-space: nowrap;
  -webkit-mask-image: linear-gradient(to right, #000 60%, transparent);
  mask-image: linear-gradient(to right, #000 60%, transparent);
}
.tab button { width: 24px; height: 24px; }
.tab button svg { width: 12px; height: 12px; }
.tab.active { padding-right: 13px; gap: 8px; isolation: isolate; }
.tab.active .tab-title { flex: none; mask-image: none; -webkit-mask-image: none; }
.tab .audio { width: 18px; height: 18px; margin-right: auto; }
.tab.active::after { display: none; }
.tab.active::before {
  content: "";
  position: absolute;
  z-index: -1;
  inset: 0 4px;
  border-radius: 12px 12px 0 0;
  background: #323b4c;
}
.new-tab { width: 42px; height: 34px; }
.window-controls { margin-left: auto; display: flex; color: #fff; }
.window-controls button { width: 57px; height: 48px; }

/* Browser toolbar */
.toolbar {
  flex: none;
  height: 59px;
  display: flex;
  align-items: center;
  padding: 0 8px 0 4px;
  background: #323b4c;
  border-bottom: 1px solid #484c54;
  color: #cdd6e8;
  font: 17px/20px var(--chrome-font);
}
.nav-btn { width: 46px; height: 42px; }
.nav-btn.dim { color: #76809a; }
.omnibox {
  flex: 1;
  height: 42px;
  margin-left: 8px;
  padding: 0 20px 0 6px;
  border-radius: 21px;
  background: #1e2636;
  display: flex;
  align-items: center;
}
.site-chip { width: 30px; height: 30px; border-radius: 15px; background: #323b4c; }
.url { flex: 1; padding-left: 10px; }
.url b { font-weight: 400; color: #f1f4fb; }
.tool-icons { display: flex; align-items: center; padding: 0 6px 0 13px; }
.tool-icons button { width: 44px; height: 42px; }
.divider { width: 2px; height: 20px; margin: 0 12px 0 9px; background: #4a5467; }
.avatar {
  width: 26px;
  height: 26px;
  border-radius: 13px;
  background: #7a1fa2;
  color: #fff;
  font-size: 13px;
  line-height: 26px;
}
.finish {
  height: 42px;
  padding: 0 18px 0 15px;
  gap: 13px;
  border-radius: 21px;
  background: #1f477e;
  color: #e2ebfc;
  font-size: 14px;
}

/* Studio header */
.app-bar {
  flex: none;
  height: 60px;
  display: flex;
  align-items: center;
  padding: 0 26px 0 24px;
  background: var(--panel);
  border-bottom: 1px solid #38373c;
  font-size: 15px;
  font-weight: 600;
}
.logo { color: var(--accent); }
.menu { display: flex; gap: 40px; margin-left: 30px; }
.history { display: flex; gap: 24px; margin-left: 50px; color: #77757c; }
.project { display: flex; align-items: center; gap: 28px; margin: 0 auto; padding: 2px 24px 0 0; }
.saved { display: flex; align-items: center; gap: 5px; color: var(--muted); font-size: 14px; font-weight: 400; }
.actions { display: flex; align-items: center; }
.theme {
  width: 66px;
  height: 32px;
  padding-left: 7px;
  border-radius: 16px;
  box-shadow: inset 0 0 0 1px #77757c;
  justify-content: space-between;
}
.theme-knob {
  width: 32px;
  height: 32px;
  border-radius: 16px;
  background: var(--muted);
  display: flex;
  align-items: center;
  justify-content: center;
}
.pill { height: 32px; border-radius: 16px; gap: 8px; font-size: 14px; }
.export { width: 124px; margin-left: 15px; border: 1px solid #8c8a91; }
.try { width: 134px; margin-left: 7px; background: #ff7a0d; color: #111; font-weight: 500; }
.share { width: 112px; margin-left: 8px; background: var(--accent); color: #111; }
.exit { flex-direction: column; gap: 5px; margin-left: 8px; padding-top: 6px; font-size: 14px; }

/* Studio */
.studio {
  position: relative;
  flex: 1;
  min-height: 0;
  display: flex;
  flex-direction: column;
}
.workspace { flex: 1; min-height: 0; display: flex; overflow: hidden; }
.track-panel { flex: none; width: 293px; border-right: 1px solid var(--line); }
.panel-head { height: 96px; border-bottom: 1px solid var(--line); }
.track {
  height: 80px;
  display: flex;
  border-bottom: 1px solid var(--line);
  color: var(--muted);
}
.track-main {
  width: 201px;
  border-right: 1px solid var(--line);
  padding-left: 13px;
  display: flex;
  gap: 12px;
}
.track.selected { background: #252527; }
.track.selected .track-main { box-shadow: inset 4px 0 0 var(--accent); }
.track-icon {
  flex: none;
  width: 42px;
  height: 42px;
  margin-top: 19px;
  border-radius: 21px;
  border: 1px solid #302f34;
  background: #252429;
  color: #f4f2f6;
  display: flex;
  align-items: center;
  justify-content: center;
}
.selected .track-icon { background: #363539; border-color: #363539; color: #8f6fe0; }
.track-info { padding-top: 7px; }
.track-name { font-size: 14px; font-weight: 500; color: #f4f2f6; white-space: nowrap; }
.selected .track-name { font-weight: 600; }
.track-controls { display: flex; align-items: center; margin-top: 14px; height: 32px; }
.rec { width: 22px; height: 22px; border-radius: 4px; background: #333138; font-size: 14px; font-weight: 700; }
.auto { margin: 0 15px 2px 20px; }
.knob { width: 30px; height: 30px; }
.vol { align-self: flex-end; font-size: 10px; line-height: 12px; font-weight: 600; margin-left: -1px; }
.track-side {
  flex: 1;
  display: grid;
  grid-template-columns: 20px 21px;
  column-gap: 20px;
  align-content: space-between;
  justify-content: end;
  padding: 14px 14px 13px 0;
}
.track-side .more { grid-column: 2; color: #a98ae6; height: 5px; }
.add-track {
  width: 100%;
  height: 80px;
  flex-direction: column;
  gap: 4px;
  border-bottom: 1px solid var(--line);
  color: var(--muted);
}

/* Timeline */
.timeline { position: relative; flex: 1; min-width: 0; overflow: hidden; }
.ruler-row {
  height: 65px;
  display: flex;
  border-bottom: 2px solid #323236;
}
.ruler {
  position: relative;
  flex: 1;
  height: 31px;
  overflow: hidden;
  border-bottom: 1px solid #e6e4e8;
  font-size: 13px;
  font-weight: 600;
  line-height: 16px;
}
.tick {
  position: absolute;
  bottom: 0;
  height: 21px;
  padding-left: 4px;
  background: linear-gradient(#c9c7cc, #c9c7cc) left bottom / 1px 10px no-repeat;
}
.ruler-tools { width: 236px; display: flex; gap: 17px; padding: 13px 0 0 12px; align-items: flex-start; color: var(--muted); }
.ruler-tools button { width: 32px; height: 32px; border-radius: 16px; }
.ruler-tools .on { background: var(--muted); color: #29282c; }
.lanes { margin-top: 30px; border-top: 1px solid var(--line); }
.lane { position: relative; height: 80px; border-bottom: 1px solid var(--line); }
.lane:first-child { background: #252527; }
.gridline { position: absolute; top: 0; bottom: 0; width: 1px; background: #333336; }
.clip { position: absolute; top: 1px; height: 78px; border-radius: 8px; }
.clip .wave { position: absolute; inset: 0; width: 100%; height: 100%; stroke-width: 3; stroke-linecap: round; }
.clip .fade { position: absolute; top: 0; height: 78px; background: #f4e8f4; opacity: .45; }
.fade.in { left: 0; clip-path: polygon(0 0, 100% 0, 0 100%); }
.fade.out { right: 0; clip-path: polygon(0 0, 100% 0, 100% 100%); }
.red { background: #d2152f; stroke: #fb6f85; }
.pink { background: #c0267a; stroke: #ec74b7; }
.plum { background: #a044a5; stroke: #d794dc; }
.violet { background: #962bf0; stroke: #c878ff; }
.blue { background: #3c5aec; stroke: #8da4ff; }
.starters {
  display: grid;
  grid-template-columns: repeat(3, 131px);
  grid-auto-rows: 125px;
  gap: 12px;
  margin: 19px 0 0 604px;
}
.starters button {
  flex-direction: column;
  justify-content: flex-start;
  padding-top: 12px;
  border-radius: 4px;
  background: #2f2e31;
  color: var(--muted);
  font-size: 16px;
  line-height: 18px;
}
.glyph { height: 50px; margin-bottom: 7px; display: flex; align-items: center; }
.one-line .glyph { margin-bottom: 16px; }
.playhead {
  position: absolute;
  left: 581px;
  top: 0;
  bottom: 0;
  width: 21px;
  background: linear-gradient(var(--accent), var(--accent)) center / 2px 100% no-repeat;
}
.vscroll {
  position: absolute;
  right: 0;
  top: 96px;
  bottom: 0;
  width: 12px;
  border-radius: 6px;
  background: #39373e;
}
.vscroll span {
  display: block;
  height: 93%;
  border: 1px solid #85838a;
  border-radius: 6px;
  background: #27262b;
}
.hscroll-row {
  flex: none;
  height: 43px;
  display: flex;
  align-items: flex-start;
  gap: 14px;
  padding: 5px 30px 0 293px;
  color: var(--muted);
}
.hscroll { flex: 1; height: 12px; margin: 4px 18px 0 0; border-radius: 6px; background: #39373e; }
.hscroll span {
  display: block;
  width: 81%;
  height: 12px;
  margin-left: 84px;
  border: 1px solid #85838a;
  border-radius: 6px;
  background: #27262b;
}
.fabs {
  position: absolute;
  right: 11px;
  top: 14px;
  display: grid;
  gap: 13px;
}
.fabs button { width: 55px; height: 55px; border-radius: 28px; background: var(--accent); color: #0d0b14; box-shadow: 0 1px 4px #0006; }

/* Transport */
.transport {
  flex: none;
  height: 72px;
  display: flex;
  align-items: center;
  padding: 1px 24px 0 23px;
  background: var(--panel);
  border-bottom: 1px solid #4a494d;
  color: var(--muted);
}
.master { width: 150px; margin-left: 22px; padding-top: 18px; text-align: center; font-size: 13px; line-height: 16px; }
.master input {
  display: block;
  width: 150px;
  height: 34px;
  margin: 0;
  appearance: none;
  background: linear-gradient(to right, var(--accent) 40%, #77757c 40%) center / 100% 5px no-repeat;
}
.master input::-webkit-slider-thumb {
  appearance: none;
  width: 32px;
  height: 32px;
  border: 2px solid #77757c;
  border-radius: 16px;
  background: #323037;
}
.clock { width: 110px; margin-left: 68px; font-size: 29px; line-height: 36px; color: #eceaee; white-space: nowrap; }
.buttons { display: flex; gap: 14px; margin-left: 28px; }
.buttons button { width: 54px; height: 54px; border-radius: 27px; background: #363539; }
.buttons .pause { background: #8c6ec2; }
.params { display: grid; grid-template-columns: 106px 100px 94px; margin-left: 40px; font-size: 14px; line-height: 18px; }
.param { height: 72px; padding-top: 27px; display: flex; flex-direction: column; align-items: center; gap: 5px; }
.param .val { font-size: 16px; line-height: 20px; font-weight: 500; }
.param.metro { padding-top: 17px; gap: 3px; }
.param.metro button { width: 50px; height: 32px; border: 1px solid #77757c; border-radius: 16px; font-size: 15px; }
.metro-gear { margin-left: 18px; }
.support {
  width: 167px;
  height: 57px;
  margin-left: auto;
  gap: 11px;
  border-radius: 28px;
  background: #cbcad1;
  color: #4d4c52;
  font: 700 19px/24px "Noto Sans", sans-serif;
}

/* Desktop taskbar */
.taskbar {
  flex: none;
  position: relative;
  height: 59px;
  display: flex;
  align-items: center;
  padding: 0 24px;
  background: #202020;
  color: #fff;
  font: 14px/20px var(--chrome-font);
}
.weather { width: 438px; display: flex; align-items: center; gap: 10px; }
.weather-icon { position: relative; }
.weather-icon b {
  position: absolute;
  left: 15px;
  top: -9px;
  width: 20px;
  height: 20px;
  border-radius: 10px;
  background: #ff99a4;
  color: #222;
  font-weight: 400;
  text-align: center;
  font-size: 12px;
}
.dock { display: flex; align-items: center; }
.dock button { position: relative; width: 49px; height: 50px; margin-right: 6px; border-radius: 5px; }
.dock .start { width: 42px; margin-right: 10px; }
.search {
  width: 275px;
  height: 40px;
  margin-right: 5px;
  padding: 0 14px;
  gap: 10px;
  border: 1px solid #4c4c4c;
  border-radius: 20px;
  background: #3c3c3c;
  display: flex;
  align-items: center;
}
.search input {
  flex: 1;
  min-width: 0;
  border: 0;
  outline: 0;
  padding: 0;
  background: none;
  color: #fff;
  font: 16px/20px var(--chrome-font);
}
.search input::placeholder { color: #d8d8d8; opacity: 1; }
.run::after {
  content: "";
  position: absolute;
  left: 21px;
  bottom: 1px;
  width: 8px;
  height: 4px;
  border-radius: 2px;
  background: #9a9a9a;
}
.dock .alert { background: #48272a; }
.alert::after { background: #ff99a4; }
.dock .current { background: #303030; }
.current::after { left: 15px; width: 20px; background: #aebcc9; }
.who {
  position: absolute;
  right: 4px;
  top: 4px;
  width: 20px;
  height: 20px;
  border-radius: 10px;
  background: #7a1fa2;
  color: #eee;
  font-size: 12px;
  font-weight: 400;
}
.who.small { top: 8px; right: 9px; width: 15px; height: 15px; font-size: 10px; line-height: 15px; background: #e06a10; }
.tray { margin-left: auto; display: flex; align-items: center; gap: 20px; }
.net { display: flex; align-items: center; gap: 9px; }
.net .white { color: #fff; }
.datetime { display: flex; align-items: center; gap: 12px; }
.date { text-align: right; }
.copilot { position: relative; padding-bottom: 6px; }
.copilot b {
  position: absolute;
  left: 6px;
  bottom: -2px;
  padding: 0 4px;
  border-radius: 3px;
  background: #f8c21c;
  color: #222;
  font-size: 9px;
  line-height: 11px;
}
```
FILE: studio.js
```js
const BAR_PITCH = 5;
const FIRST_TICK = 49;
const TICK_STEP = 53.36;

const tracks = [
  { name: "New Recording", icon: "i-wave", angle: -20, selected: true },
  { name: "Blue Spaces", icon: "i-wave", angle: -93 },
  { name: "Mic", icon: "i-mic", angle: -85 },
  { name: "Simple and Goo...", icon: "i-wave", angle: -112 },
  { name: "_Sixty bucks for ...", icon: "i-wave", angle: -45 }
];

// Each clip: x, width, colour, offset of the first bar, bar heights, fade-in width, fade-out width.
const clips = [
  [
    [-12, 22, "red", 13, "12 43"],
    [11, 19, "red", 5, "22 13 15"],
    [33, 18, "red", 5, "28 23 30"],
    [62, 14, "red", 5, "43 28 28"],
    [111, 119, "red", 4, "36 41 30 34 17 26 22 13 30 32 13 39 27 16 7 44 18 47 34 34 35 15 27 27"],
    [231, 55, "red", 4, "14 32 34 13 13 32 34 35 43 30 18"],
    [298, 180, "red", 14, "39 39 21 12 17 13 22 21 18 45 47 24 28 14 38 24 28 37 18 22 29 50 45 16 30 18 30 11 34 33 20 13 28 18"],
    [480, 118, "red", 4, "30 13 36 24 41 7 40 51 36 33 34 8 22 45 16 6 27 14 43 16 27 24 34"],
    [616, 12, "red", 4, ""],
    [626, 47, "red", 3, "7 46 22 46 18 34 27 32 7"],
    [675, 311, "red", 4, "36 29 33 22 11 26 39 16 10 26 22 6 29 7 20 31 18 20 23 40 36 27 25 39 12 20 20 48 39 20 29 18 30 20 9 40 29 24 14 18 20 40 12 15 23 28 39 11 16 18 12 34 37 18 31 12 16 11 14 20 16 30"],
    [987, 118, "red", 4, "20 25 29 7 27 18 25 33 14 21 27 34 38 25 18 30 6 27 38 16 29 22 20"],
    [1106, 104, "red", 13, "15 15 25 11 7 15 47 30 8 18 29 20 33 33 23 12 46 27 15"],
    [1212, 135, "red", 4, "45 12 29 7 16 20 41 37 22 28 15 37 20 19 20 23 29 15 17 50 29 9 19 27 16 30 40"],
    [1348, 13, "red", 4, ""]
  ],
  [
    [27, 49, "pink", 4, "12 25 22 14 19 14 14 26 10 28", 8],
    [111, 171, "pink", 4, "16 10 24 17 12 14 17 18 27 20 15 10 21 12 12 19 14 36 24 32 13 29 28 22 18 10 16 24 18 26 27 24 16 12"],
    [303, 289, "pink", 4, "32 32 20 22 14 16 14 9 16 30 19 39 18 7 22 28 14 18 10 22 27 14 22 14 29 15 27 24 12 17 36 34 18 18 9 18 12 22 16 28 22 9 22 12 10 13 16 16 18 20 24 22 20 14 18 12 32"],
    [621, 40, "pink", 4, "16 12 19 28 17 24 14 5", 0, 5]
  ],
  [
    [282, 25, "plum", 4, "20 25 16 16 38", 5, 8],
    [595, 25, "plum", 4, "24 27 16 11 33", 5, 4],
    [1241, 146, "plum", 4, "13 25 22 13 20 14 14 26 10 31 17 11 25 18 13 13 17 17 27 19 15 11 22 13 13 19 14 36 25", 9, 17]
  ],
  [
    [662, 584, "violet", 4, "28 12 9 18 24 31 28 12 29 34 22 10 20 31 24 20 12 24 30 20 34 20 20 26 26 20 28 32 16 22 14 22 24 23 28 32 14 32 13 20 33 31 26 12 26 35 20 32 18 30 32 16 16 39 20 31 14 17 17 17 17 12 22 22 38 17 17 31 20 14 24 18 32 27 30 30 20 22 20 32 26 37 10 18 22 18 15 26 20 44 16 32 18 26 20 34 28 16 24 20 30 22 32 16 22 32 20 12 16 10 6 3 2 2 2 2", 3, 20]
  ],
  [
    [76, 31, "blue", 4, "12 4 6 17 7 7", 2],
    [1341, 12, "blue", 4, ""]
  ]
];

const ticks = Array.from({ length: 30 }, (_, i) => ({
  x: Math.round(FIRST_TICK + i * TICK_STEP),
  bar: 25 + i * 8
}));

document.getElementById("trackList").innerHTML = tracks.map(t => `
  <div class="track${t.selected ? " selected" : ""}">
    <div class="track-main">
      <span class="track-icon"><svg width="22" height="22"><use href="#${t.icon}"/></svg></span>
      <div class="track-info">
        <div class="track-name">${t.name}</div>
        <div class="track-controls">
          <button class="rec" aria-label="Arm recording">R</button>
          <button class="auto" aria-label="Automation"><svg width="20" height="20"><use href="#i-auto"/></svg></button>
          <svg class="knob" viewBox="0 0 30 30"><circle cx="15" cy="15" r="13.5" fill="none" stroke="#85838a"/><path d="M15 11V1" stroke="#9c78e4" stroke-width="2.400" transform="rotate(${t.angle} 15 15)"/></svg>
          <span class="vol">Vol</span>
        </div>
      </div>
    </div>
    <div class="track-side">
      <button class="more" aria-label="More"><svg width="19" height="5"><circle cx="2.500" cy="2.500" r="2.500" fill="currentColor"/><circle cx="9.500" cy="2.500" r="2.500" fill="currentColor"/><circle cx="16.500" cy="2.500" r="2.500" fill="currentColor"/></svg></button>
      <button aria-label="Solo"><svg width="20" height="18"><use href="#i-head"/></svg></button>
      <button aria-label="Mute"><svg width="21" height="18"><use href="#i-mute"/></svg></button>
    </div>
  </div>`).join("");

document.getElementById("ruler").innerHTML = ticks
  .map(t => `<span class="tick" style="left:${t.x}px">${t.bar}</span>`).join("");

const grid = ticks.map(t => `<i class="gridline" style="left:${t.x - 1}px"></i>`).join("");

function clipMarkup([x, w, colour, offset, bars, fadeIn, fadeOut]) {
  const path = bars.split(" ").filter(Boolean).map((h, i) => {
    const half = Math.max(0.1, (h - 3) / 2);
    return `M${offset + 0.5 + i * BAR_PITCH} ${38 - half}v${half * 2}`;
  }).join("");
  return `<div class="clip ${colour}" style="left:${x}px;width:${w}px">
    <svg class="wave"><path d="${path}"/></svg>
    ${fadeIn ? `<i class="fade in" style="width:${fadeIn}px"></i>` : ""}
    ${fadeOut ? `<i class="fade out" style="width:${fadeOut}px"></i>` : ""}
  </div>`;
}

document.getElementById("lanes").innerHTML = clips
  .map(lane => `<div class="lane">${grid}${lane.map(clipMarkup).join("")}</div>`).join("");
```
